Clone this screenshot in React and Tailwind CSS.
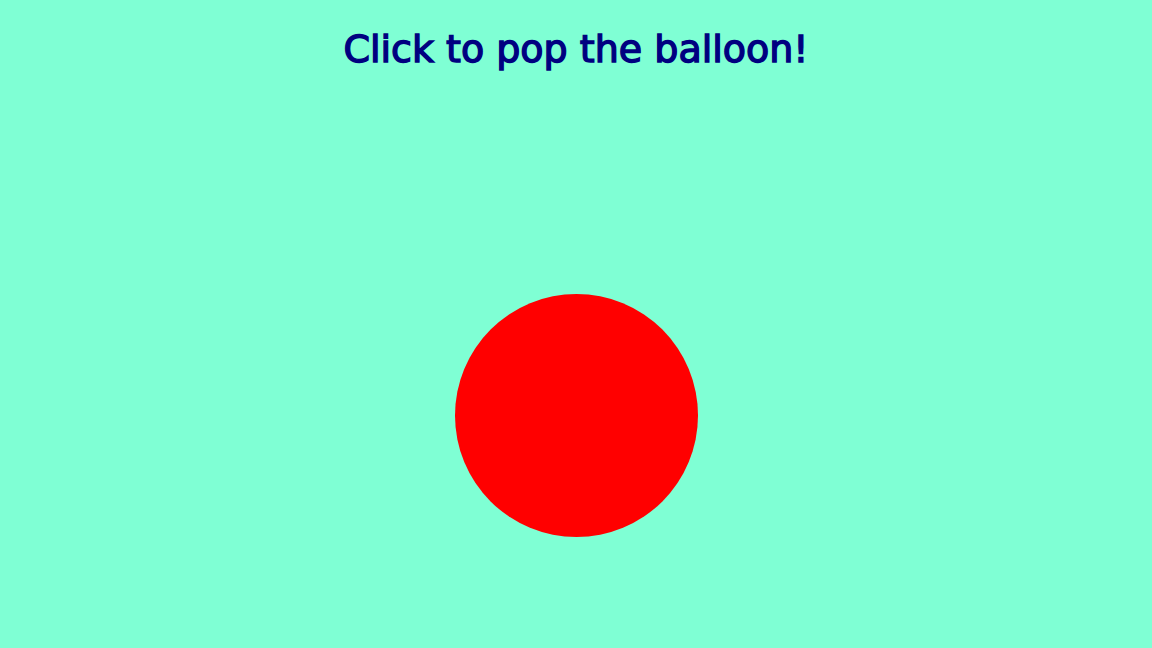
const App = () => {
    return (
        <div className="flex h-screen w-screen flex-col items-center bg-[#7fffd4] overflow-hidden">
            {/* Title */}
            <h1 className="mt-[26px] text-[38px] leading-[46px] font-normal text-[#000080] [-webkit-text-stroke:1.4px_#000080] font-['DejaVu_Sans',sans-serif]">
                Click to pop the balloon!
            </h1>

            {/* Balloon */}
            <div className="mt-[222px] h-[243px] w-[243px] rounded-full bg-[#ff0000] cursor-pointer"></div>
        </div>
    );
};

export default App;
